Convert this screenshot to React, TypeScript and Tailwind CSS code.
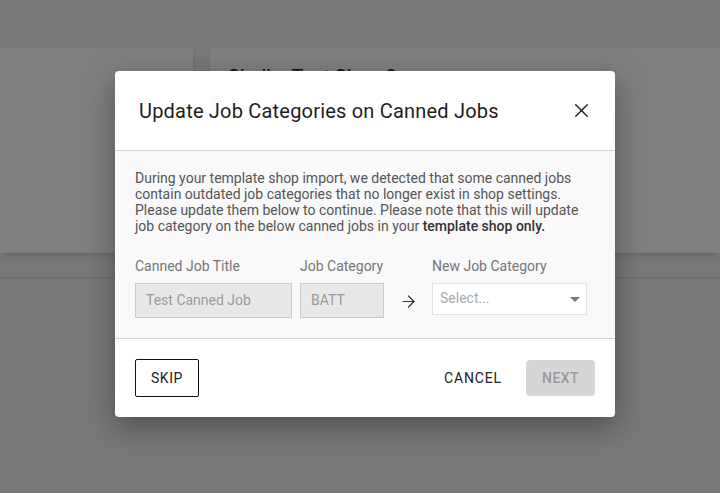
import { X, ArrowRight } from 'lucide-react';

export default function App() {
  return (
    <div className="relative h-[493px] w-[720px] overflow-hidden bg-[#eef0f2] font-['Roboto',sans-serif]">
      {/* page behind the dialog */}
      <div className="flex gap-[17px] pt-[48px]">
        <div className="h-[205px] w-[193px] shrink-0 rounded-r-[4px] bg-white shadow-md" />
        <div className="h-[205px] flex-1 rounded-l-[4px] bg-white px-[18px] pt-[14px] shadow-md">
          <h2 className="text-[20px] text-[#222]">Shelby Test Shop 2</h2>
        </div>
      </div>
      <div className="mt-[24px] border-t border-[#d6d6d6]" />

      {/* overlay */}
      <div className="absolute inset-0 flex items-start justify-center bg-black/50 pl-[10px] pt-[71px]">
        <div className="w-[500px] overflow-hidden rounded-[4px] bg-white shadow-[0_10px_30px_rgba(0,0,0,0.35)]">
          <div className="flex h-[80px] items-center justify-between border-b border-[#d2d2d2] pl-[24px] pr-[22px]">
            <h1 className="text-[20px] leading-none tracking-[0.01em] text-[#1e1e1e]">
              Update Job Categories on Canned Jobs
            </h1>
            <button type="button" aria-label="Close" className="text-[#222]">
              <X className="h-[23px] w-[23px]" strokeWidth={1.5} />
            </button>
          </div>

          <div className="border-b border-[#d2d2d2] bg-[#f9f9f9] px-[20px] pb-[20px] pt-[19px]">
            <p className="text-[14px] leading-[16px] text-[#555]">
              During your template shop import, we detected that some canned jobs contain outdated job categories
              that no longer exist in shop settings. Please update them below to continue. Please note that this will
              update job category on the below canned jobs in your{' '}
              <span className="font-medium text-[#333]">template shop only.</span>
            </p>

            <div className="mt-[24px] flex items-end">
              <div className="w-[157px]">
                <div className="mb-[9px] text-[14px] leading-[16px] text-[#777]">Canned Job Title</div>
                <div className="flex h-[35px] items-center border border-[#cacaca] bg-[#e8e8e8] px-[10px] text-[14px] text-[#9a9a9a]">
                  Test Canned Job
                </div>
              </div>
              <div className="ml-[8px] w-[84px]">
                <div className="mb-[9px] text-[14px] leading-[16px] text-[#777]">Job Category</div>
                <div className="flex h-[35px] items-center border border-[#cacaca] bg-[#e8e8e8] px-[10px] text-[14px] text-[#9a9a9a]">
                  BATT
                </div>
              </div>
              <div className="flex h-[35px] w-[48px] items-center justify-center pt-[1px] text-[#333]">
                <ArrowRight className="h-[19px] w-[19px]" strokeWidth={1.5} />
              </div>
              <div className="w-[155px]">
                <div className="mb-[9px] text-[14px] leading-[16px] text-[#777]">New Job Category</div>
                <div className="mb-[3px] flex h-[32px] items-center justify-between border border-[#e2e2e2] bg-white pl-[7px] pr-[6px] text-[14px] text-[#aaa]">
                  <span className="-mt-[2px]">Select...</span>
                  <span className="h-0 w-0 border-x-[5px] border-t-[5px] border-x-transparent border-t-[#777]" />
                </div>
              </div>
            </div>
          </div>

          <div className="flex h-[78px] items-center justify-between px-[20px]">
            <button
              type="button"
              className="h-[38px] w-[64px] rounded-[2px] border border-[#111] text-[14px] tracking-[0.04em] text-[#222]"
            >
              SKIP
            </button>
            <div className="flex items-center gap-[24px]">
              <button type="button" className="text-[14px] tracking-[0.06em] text-[#222]">
                CANCEL
              </button>
              <button
                type="button"
                disabled
                className="h-[36px] w-[69px] rounded-[4px] bg-[#d6d6d6] text-[14px] font-medium tracking-[0.03em] text-[#999]"
              >
                NEXT
              </button>
            </div>
          </div>
        </div>
      </div>
    </div>
  );
}
